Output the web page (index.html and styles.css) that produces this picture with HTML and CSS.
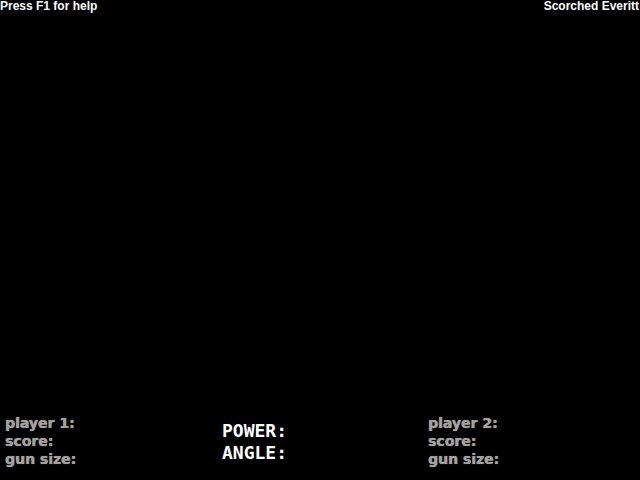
FILE: index.html
```html
<!DOCTYPE html>
<html>
<head>
<meta charset="utf-8">
<link rel="stylesheet" href="styles.css">
</head>
<body>
<div class="screen">
  <div class="topbar">
    <span class="help">Press F1 for help</span>
    <span class="title">Scorched Everitt</span>
  </div>
  <div class="field"></div>
  <div class="hud">
    <div class="player">
      <div class="line">player 1:</div>
      <div class="line">score:</div>
      <div class="line">gun size:</div>
    </div>
    <div class="controls">
      <div class="cline">POWER:</div>
      <div class="cline">ANGLE:</div>
    </div>
    <div class="player">
      <div class="line">player 2:</div>
      <div class="line">score:</div>
      <div class="line">gun size:</div>
    </div>
  </div>
</div>
</body>
</html>
```
FILE: styles.css
```css
html, body {
  margin: 0;
  padding: 0;
  background: #000;
}
.screen {
  width: 640px;
  height: 480px;
  display: flex;
  flex-direction: column;
  overflow: hidden;
}
.topbar {
  display: flex;
  justify-content: space-between;
  font-family: "Liberation Sans", Arial, sans-serif;
  font-weight: bold;
  font-size: 12px;
  line-height: 13px;
  color: #fff;
  padding: 0 1px 0 0;
}
.field {
  flex: 1;
}
.hud {
  display: grid;
  grid-template-columns: 217px 206px 1fr;
  padding: 0 0 12px 5px;
}
.player {
  display: flex;
  flex-direction: column;
  font-family: "DejaVu Sans", sans-serif;
  font-weight: bold;
  font-size: 14px;
  line-height: 18px;
  color: #a3a3a3;
  text-shadow: 0 0 1px rgba(120,120,120,0.9), 0.4px 0 0 #8a8a8a;
}
.controls {
  display: flex;
  flex-direction: column;
  padding-top: 6px;
  font-family: "DejaVu Sans Mono", monospace;
  font-weight: bold;
  font-size: 18px;
  line-height: 22px;
  color: #fff;
}
```
